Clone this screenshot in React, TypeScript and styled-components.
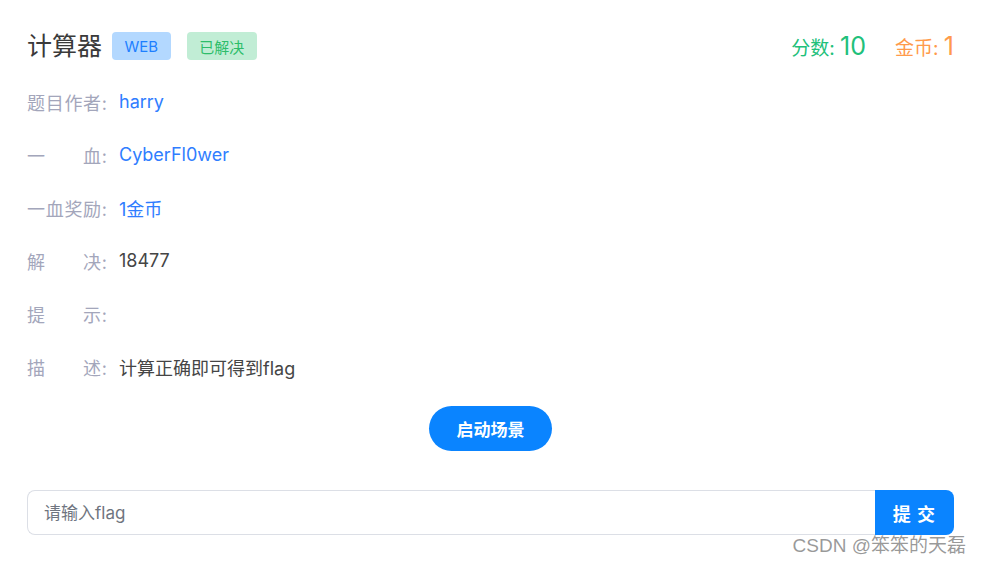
import React from 'react';
import styled, { createGlobalStyle } from 'styled-components';

const GlobalStyle = createGlobalStyle`
  html, body {
    margin: 0;
    padding: 0;
    background: #ffffff;
  }
  body {
    font-family: Inter, "Noto Sans CJK SC", sans-serif;
  }
`;

interface InfoRow {
  label: string;
  value?: string;
  tone: 'link' | 'plain';
}

const rows: InfoRow[] = [
  { label: '题目作者:', value: 'harry', tone: 'link' },
  { label: '一　　血:', value: 'CyberFl0wer', tone: 'link' },
  { label: '一血奖励:', value: '1金币', tone: 'link' },
  { label: '解　　决:', value: '18477', tone: 'plain' },
  { label: '提　　示:', tone: 'plain' },
  { label: '描　　述:', value: '计算正确即可得到flag', tone: 'plain' },
];

const App: React.FC = () => {
  return (
    <Page>
      <GlobalStyle />
      <Header>
        <TitleGroup>
          <Title>计算器</Title>
          <Tag variant="blue">WEB</Tag>
          <Tag variant="green">已解决</Tag>
        </TitleGroup>
        <Stats>
          <Stat color="#21c07a">
            分数: <StatNum>10</StatNum>
          </Stat>
          <Stat color="#ff9a4a">
            金币: <StatNum>1</StatNum>
          </Stat>
        </Stats>
      </Header>

      <InfoList>
        {rows.map((row) => (
          <Row key={row.label}>
            <Label>{row.label}</Label>
            <Value tone={row.tone}>{row.value}</Value>
          </Row>
        ))}
      </InfoList>

      <Center>
        <StartButton>启动场景</StartButton>
      </Center>

      <FlagForm>
        <FlagInput placeholder="请输入flag" />
        <SubmitButton>提 交</SubmitButton>
      </FlagForm>

      <Watermark>CSDN @笨笨的天磊</Watermark>
    </Page>
  );
};

const Page = styled.div`
  position: relative;
  width: 982px;
  height: 563px;
  box-sizing: border-box;
  padding: 28px 28px 0 27px;
  font-family: Inter, "Noto Sans CJK SC", sans-serif;
`;

const Header = styled.div`
  display: flex;
  align-items: center;
  justify-content: space-between;
  height: 36px;
`;

const TitleGroup = styled.div`
  display: flex;
  align-items: center;
  gap: 16px;
`;

const Title = styled.h1`
  margin: 0 -6px 0 0;
  font-size: 25px;
  font-weight: 400;
  color: #3a3a3a;
  line-height: 1;
`;

const Tag = styled.span<{ variant: 'blue' | 'green' }>`
  display: inline-flex;
  align-items: center;
  justify-content: center;
  height: 28px;
  padding: 0 12.5px;
  border-radius: 4px;
  font-size: 15px;
  background: ${(p) => (p.variant === 'blue' ? '#b3d8ff' : '#c1edd5')};
  color: ${(p) => (p.variant === 'blue' ? '#1d7fff' : '#2dbd6a')};
`;

const Stats = styled.div`
  display: flex;
  align-items: baseline;
  gap: 29px;
`;

const Stat = styled.span<{ color: string }>`
  font-size: 19px;
  color: ${(p) => p.color};
`;

const StatNum = styled.span`
  font-size: 25px;
`;

const InfoList = styled.div`
  display: flex;
  flex-direction: column;
  margin-top: 11px;
`;

const Row = styled.div`
  display: flex;
  align-items: center;
  height: 53px;
  font-size: 18px;
`;

const Label = styled.span`
  width: 80px;
  margin-right: 12px;
  color: #a3a6bb;
  text-align: justify;
  text-align-last: justify;
  white-space: nowrap;
`;

const Value = styled.span<{ tone: 'link' | 'plain' }>`
  color: ${(p) => (p.tone === 'link' ? '#2f7dff' : '#454545')};
`;

const Center = styled.div`
  display: flex;
  justify-content: center;
  margin-top: 13px;
`;

const StartButton = styled.button`
  width: 123px;
  height: 45px;
  border: none;
  border-radius: 23px;
  background: #0a84ff;
  color: #ffffff;
  font-family: Inter, "Noto Sans CJK SC", sans-serif;
  font-size: 17px;
  font-weight: 700;
  cursor: pointer;
`;

const FlagForm = styled.div`
  display: flex;
  margin-top: 39px;
  width: 927px;
  height: 45px;
`;

const FlagInput = styled.input`
  flex: 1;
  box-sizing: border-box;
  height: 45px;
  padding: 0 16px;
  border: 1px solid #dcdfe6;
  border-right: none;
  border-radius: 8px 0 0 8px;
  font-family: Inter, "Noto Sans CJK SC", sans-serif;
  font-size: 17px;
  color: #454545;
  outline: none;

  &::placeholder {
    color: #6f7580;
  }
`;

const SubmitButton = styled.button`
  width: 79px;
  height: 45px;
  border: none;
  border-radius: 0 8px 8px 0;
  background: #0a84ff;
  color: #ffffff;
  font-family: Inter, "Noto Sans CJK SC", sans-serif;
  font-size: 18px;
  font-weight: 700;
  letter-spacing: 1px;
  cursor: pointer;
`;

const Watermark = styled.div`
  position: absolute;
  right: 16px;
  top: 530px;
  font-family: "Liberation Sans", "Noto Sans CJK SC", sans-serif;
  font-size: 19px;
  color: rgba(120, 120, 120, 0.75);
  pointer-events: none;
`;

export default App;
